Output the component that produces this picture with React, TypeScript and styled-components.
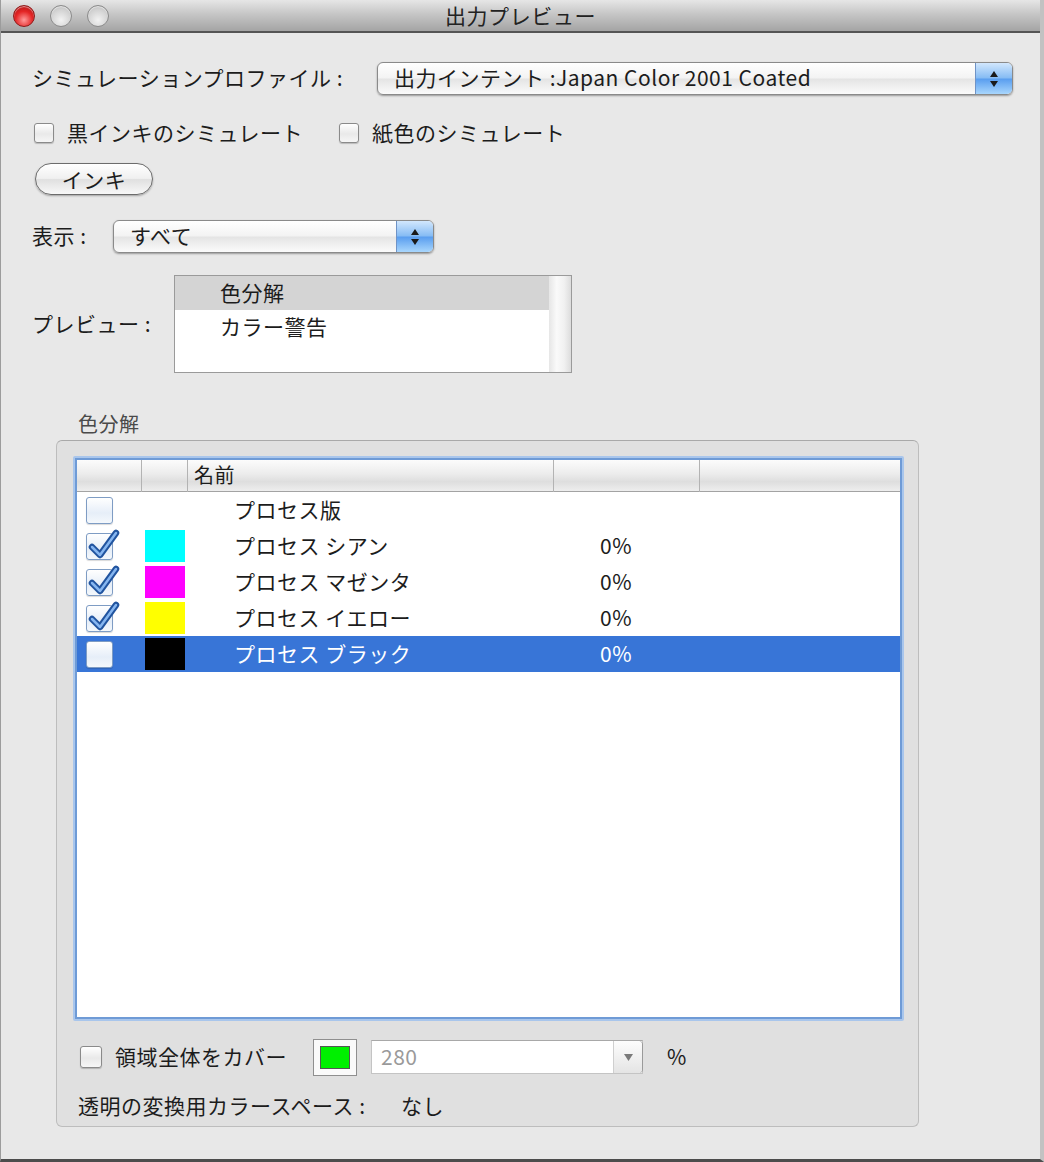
import React from "react";
import styled, { createGlobalStyle } from "styled-components";

const GlobalStyle = createGlobalStyle`
  html, body {
    margin: 0;
    padding: 0;
    background: #e8e8e8;
  }

  body {
    font-family: "Noto Sans CJK JP", "Noto Sans", sans-serif;
    color: #1c1c1c;
  }
`;

const Window = styled.div`
  width: 1044px;
  height: 1162px;
  box-sizing: border-box;

  display: flex;
  flex-direction: column;

  background: #e8e8e8;
  border-left: 1px solid #9c9c9c;
  border-right: 4px solid #c2c2c2;
  border-bottom: 3px solid #4c4c4c;
`;

const TitleBar = styled.div`
  height: 31px;
  flex: none;

  display: grid;
  grid-template-columns: 1fr auto 1fr;
  align-items: center;

  background: linear-gradient(#e6e6e6, #c6c6c6 45%, #a4a4a4);
  border-bottom: 2px solid #555;
`;

const Lights = styled.div`
  display: flex;
  gap: 15px;
  padding-left: 12px;
`;

const Light = styled.span<{ $red?: boolean }>`
  width: 22px;
  height: 22px;
  box-sizing: border-box;
  border-radius: 50%;

  border: 1px solid ${(p) => (p.$red ? "#8e1b1b" : "#8b8b8b")};
  background: ${(p) =>
    p.$red
      ? "radial-gradient(circle at 50% 70%, #ff9a9a, #e42626 50%, #a10d0d 100%)"
      : "radial-gradient(circle at 50% 70%, #f2f2f2, #d2d2d2 60%, #b4b4b4)"};
  box-shadow: inset 0 1px 1px rgba(255, 255, 255, 0.6);
`;

const Title = styled.div`
  font-size: 21px;
  letter-spacing: 0.6px;
  color: #222;
  padding-bottom: 2px;
`;

const Content = styled.div`
  flex: 1;
  display: flex;
  flex-direction: column;

  padding: 29px 0 0 31px;

  font-size: 21px;
  letter-spacing: 0.5px;
`;

const Row = styled.div<{ $mt: number; $h: number }>`
  display: flex;
  align-items: center;

  margin-top: ${(p) => p.$mt}px;
  height: ${(p) => p.$h}px;
`;

const Label = styled.span<{ $w: number }>`
  width: ${(p) => p.$w}px;
  flex: none;
  white-space: nowrap;
  padding-bottom: 3px;
`;

const Popup = styled.div<{ $w: number }>`
  width: ${(p) => p.$w}px;
  height: 33px;
  box-sizing: border-box;

  display: flex;
  align-items: center;

  border: 1px solid #8a8a8a;
  border-radius: 6px;
  background: linear-gradient(#ffffff, #f3f3f3 48%, #e4e4e4 52%, #fbfbfb);
  box-shadow: 0 1px 2px rgba(0, 0, 0, 0.35);
  overflow: hidden;
`;

const PopupText = styled.span`
  flex: 1;
  padding: 0 0 3px 16px;
  white-space: nowrap;
`;

const Stepper = styled.span`
  width: 36px;
  height: 100%;

  display: flex;
  align-items: center;
  justify-content: center;

  background: linear-gradient(#d2e7fd, #86bcf4 48%, #5a9eef 52%, #a8d6fd);
  border-left: 1px solid #6f93c6;
`;

const CheckLabel = styled.label<{ $ml?: number }>`
  display: flex;
  align-items: center;
  gap: 13px;
  margin-left: ${(p) => p.$ml ?? 0}px;
  white-space: nowrap;
`;

const CheckText = styled.span`
  padding-bottom: 3px;
`;

const SmallBox = styled.span<{ $size: number }>`
  width: ${(p) => p.$size}px;
  height: ${(p) => p.$size}px;
  box-sizing: border-box;
  flex: none;

  border: 1px solid #8a8a8a;
  border-radius: 3px;
  background: linear-gradient(#ffffff, #e9e9e9 55%, #f6f6f6);
  box-shadow: 0 1px 1px rgba(0, 0, 0, 0.2);
`;

const PillButton = styled.button`
  margin: 18px 0 0 3px;
  width: 118px;
  height: 32px;

  font-family: inherit;
  font-size: 21px;
  letter-spacing: 0.5px;
  color: #1c1c1c;

  border: 1.5px solid #6c6c6c;
  border-radius: 16px;
  background: linear-gradient(#ffffff, #f0f0f0 48%, #e0e0e0 52%, #f8f8f8);
  box-shadow: 0 1px 2px rgba(0, 0, 0, 0.3);
  padding: 0 0 3px;
`;

const PreviewList = styled.div`
  width: 398px;
  height: 98px;
  box-sizing: border-box;

  display: flex;

  border: 1px solid #9a9a9a;
  background: #fff;
`;

const PreviewItems = styled.div`
  flex: 1;
  display: flex;
  flex-direction: column;
`;

const PreviewItem = styled.div<{ $selected?: boolean }>`
  height: 34px;
  box-sizing: border-box;
  display: flex;
  align-items: center;
  padding: 0 0 3px 45px;
  background: ${(p) => (p.$selected ? "#d4d4d4" : "transparent")};
`;

const ScrollStrip = styled.div`
  width: 22px;
  background: linear-gradient(90deg, #e6e6e6, #fafafa 35%, #f0f0f0 70%, #dcdcdc);
`;

const GroupTitle = styled.div`
  margin: 40px 0 0 46px;
  height: 24px;
  line-height: 22px;
  font-size: 20px;
  color: #4a4a4a;
`;

const GroupBox = styled.div`
  margin: 3px 0 0 24px;
  width: 863px;
  height: 687px;
  box-sizing: border-box;

  display: flex;
  flex-direction: column;

  padding: 15px 14px 0 16px;

  background: #e0e0e0;
  border: 1px solid #bdbdbd;
  border-top-color: #a9a9a9;
  border-radius: 6px;
`;

const TableFrame = styled.div`
  height: 565px;
  box-sizing: border-box;

  display: flex;
  flex-direction: column;

  border: 2px solid #a9c6ec;
  box-shadow: inset 0 0 0 2px #6f9bd6;
  padding: 2px;
  border-radius: 2px;
  background: #fff;
`;

const COLS = "65px 46px 366px 146px 1fr";

const HeaderRow = styled.div`
  display: grid;
  grid-template-columns: ${COLS};
  height: 31px;
  flex: none;

  background: linear-gradient(#fcfcfc, #ececec 45%, #dedede 70%, #eeeeee);
  border-bottom: 1px solid #a3a3a3;
`;

const HeaderCell = styled.div<{ $last?: boolean }>`
  display: flex;
  align-items: center;
  padding: 0 0 3px 6px;
  border-right: ${(p) => (p.$last ? "none" : "1px solid #b3b3b3")};
  font-size: 20px;
`;

const Body = styled.div`
  flex: 1;
  background: #fff;
`;

const DataRow = styled.div<{ $selected?: boolean }>`
  display: grid;
  grid-template-columns: ${COLS};
  height: 36px;
  align-items: center;

  background: ${(p) => (p.$selected ? "#3875d7" : "transparent")};
  color: ${(p) => (p.$selected ? "#fff" : "#1c1c1c")};
`;

const BoxCell = styled.div<{ $pad: number }>`
  padding-left: ${(p) => p.$pad}px;
  display: flex;
  align-items: center;
`;

const TableBox = styled.span`
  position: relative;
  width: 27px;
  height: 27px;
  box-sizing: border-box;

  border: 1px solid #7e9cc4;
  border-radius: 3px;
  background: linear-gradient(#ffffff, #e6eef8 60%, #f4f8fc);
  box-shadow: 0 1px 1px rgba(0, 0, 0, 0.15);
`;

const CheckMark = styled.svg`
  position: absolute;
  left: -1px;
  top: -7px;
`;

const Swatch = styled.span<{ $color: string }>`
  margin-left: 3px;
  width: 40px;
  height: 32px;
  background: ${(p) => p.$color};
`;

const TextCell = styled.div`
  padding: 0 0 3px 46px;
  white-space: nowrap;
`;

const ColorWell = styled.span`
  margin-left: 14px;
  width: 44px;
  height: 37px;
  box-sizing: border-box;
  padding: 6px;

  border: 1px solid #8f8f8f;
  background: #fafafa;
  display: flex;
`;

const WellFill = styled.span`
  flex: 1;
  background: #00f000;
  border: 1px solid #555;
`;

const Combo = styled.div`
  margin-left: 14px;
  width: 272px;
  height: 34px;
  box-sizing: border-box;

  display: flex;

  background: #fff;
  border: 1px solid #c4c4c4;
  border-top-color: #a8a8a8;
`;

const ComboText = styled.span`
  flex: 1;
  display: flex;
  align-items: center;
  padding: 0 0 3px 9px;
  color: #9a9a9a;
`;

const ComboArrow = styled.span`
  width: 28px;
  display: flex;
  align-items: center;
  justify-content: center;

  border-left: 1px solid #cfcfcf;
  border-radius: 0 4px 4px 0;
  background: linear-gradient(#fdfdfd, #e4e4e4);
  box-shadow: 1px 0 0 #9a9a9a;
`;

const Unit = styled.span`
  margin-left: 24px;
  padding-bottom: 3px;
`;

const StepperArrows = () => (
  <svg width="10" height="18" viewBox="0 0 10 18">
    <path d="M5 1 L9 7 L1 7 Z" fill="#1a1a1a" />
    <path d="M5 17 L9 11 L1 11 Z" fill="#1a1a1a" />
  </svg>
);

const Check = () => (
  <CheckMark width="34" height="34" viewBox="0 0 34 34">
    <path
      d="M6 20 L14 28 L30 6"
      fill="none"
      stroke="#21549f"
      strokeWidth="6.5"
      strokeLinecap="round"
      strokeLinejoin="round"
    />
    <path
      d="M6 20 L14 28 L30 6"
      fill="none"
      stroke="#86b6f0"
      strokeWidth="2.5"
      strokeLinecap="round"
      strokeLinejoin="round"
    />
  </CheckMark>
);

type Separation = {
  name: string;
  checked: boolean;
  color?: string;
  value: string;
  selected?: boolean;
};

const separations: Separation[] = [
  { name: "プロセス版", checked: false, value: "" },
  { name: "プロセス シアン", checked: true, color: "#00ffff", value: "0%" },
  { name: "プロセス マゼンタ", checked: true, color: "#ff00ff", value: "0%" },
  { name: "プロセス イエロー", checked: true, color: "#ffff00", value: "0%" },
  {
    name: "プロセス ブラック",
    checked: false,
    color: "#000000",
    value: "0%",
    selected: true,
  },
];

const App = () => {
  return (
    <>
      <GlobalStyle />
      <Window>
        <TitleBar>
          <Lights>
            <Light $red />
            <Light />
            <Light />
          </Lights>
          <Title>出力プレビュー</Title>
          <div />
        </TitleBar>

        <Content>
          <Row $mt={0} $h={33}>
            <Label $w={345}>シミュレーションプロファイル :</Label>
            <Popup $w={636}>
              <PopupText>出力インテント :Japan Color 2001 Coated</PopupText>
              <Stepper>
                <StepperArrows />
              </Stepper>
            </Popup>
          </Row>

          <Row $mt={26} $h={24}>
            <CheckLabel $ml={2}>
              <SmallBox $size={20} />
              <CheckText>黒インキのシミュレート</CheckText>
            </CheckLabel>
            <CheckLabel $ml={36}>
              <SmallBox $size={20} />
              <CheckText>紙色のシミュレート</CheckText>
            </CheckLabel>
          </Row>

          <div>
            <PillButton>インキ</PillButton>
          </div>

          <Row $mt={25} $h={33}>
            <Label $w={81}>表示 :</Label>
            <Popup $w={321}>
              <PopupText>すべて</PopupText>
              <Stepper>
                <StepperArrows />
              </Stepper>
            </Popup>
          </Row>

          <Row $mt={22} $h={98}>
            <Label $w={142}>プレビュー :</Label>
            <PreviewList>
              <PreviewItems>
                <PreviewItem $selected>色分解</PreviewItem>
                <PreviewItem>カラー警告</PreviewItem>
              </PreviewItems>
              <ScrollStrip />
            </PreviewList>
          </Row>

          <GroupTitle>色分解</GroupTitle>
          <GroupBox>
            <TableFrame>
              <HeaderRow>
                <HeaderCell />
                <HeaderCell />
                <HeaderCell>名前</HeaderCell>
                <HeaderCell />
                <HeaderCell $last />
              </HeaderRow>
              <Body>
                {separations.map((s) => (
                  <DataRow key={s.name} $selected={s.selected}>
                    <BoxCell $pad={9}>
                      <TableBox>{s.checked && <Check />}</TableBox>
                    </BoxCell>
                    <BoxCell $pad={0}>
                      {s.color && <Swatch $color={s.color} />}
                    </BoxCell>
                    <TextCell>{s.name}</TextCell>
                    <TextCell>{s.value}</TextCell>
                    <div />
                  </DataRow>
                ))}
              </Body>
            </TableFrame>

            <Row $mt={17} $h={38} style={{ paddingLeft: 7 }}>
              <CheckLabel>
                <SmallBox $size={22} />
                <Label $w={184}>領域全体をカバー</Label>
              </CheckLabel>
              <ColorWell>
                <WellFill />
              </ColorWell>
              <Combo>
                <ComboText>280</ComboText>
                <ComboArrow>
                  <svg width="9" height="7" viewBox="0 0 9 7">
                    <path d="M0 0 L9 0 L4.5 7 Z" fill="#7a7a7a" />
                  </svg>
                </ComboArrow>
              </Combo>
              <Unit>%</Unit>
            </Row>

            <Row $mt={18} $h={24} style={{ paddingLeft: 5 }}>
              <Label $w={323}>透明の変換用カラースペース :</Label>
              <CheckText>なし</CheckText>
            </Row>
          </GroupBox>
        </Content>
      </Window>
    </>
  );
};

export default App;
